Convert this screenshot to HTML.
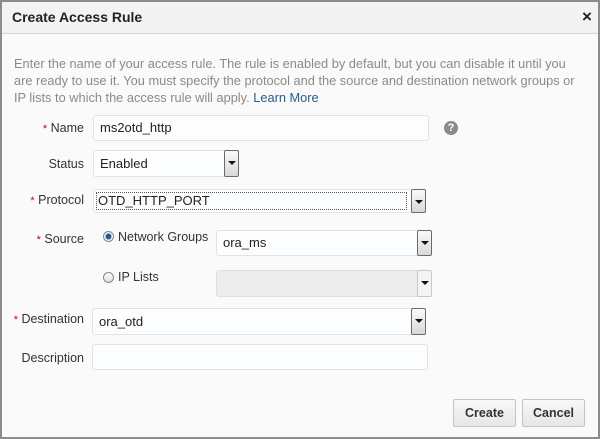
<!DOCTYPE html>
<html><head><style>
*{box-sizing:border-box;margin:0;padding:0}
body{width:600px;height:439px;background:#fff;font-family:"Liberation Sans",Arial,sans-serif;position:relative;overflow:hidden}
.dlg{position:absolute;left:0;top:0;width:600px;height:439px;border:2px solid #8c8c8c;background:#fafafa}
.hdr{position:absolute;left:0;top:0;width:596px;height:32px;background:#f3f3f3;border-bottom:1px solid #d6d6d6}
.t{position:absolute;font-size:13px;color:#333}
.lbl{position:absolute;font-size:12.5px;color:#333;text-align:right;width:90px}
.lbl b{color:#c00;font-weight:normal;font-size:11px}
.inp{position:absolute;background:#fcfdfe;border:1px solid #dfe3e8;border-radius:3px;font-size:13px;color:#222;padding-left:6px}
.arr{position:absolute;top:-1px;right:-1px;bottom:-1px;width:15px;border:1px solid #6b6b6b;background:linear-gradient(#fafafa,#d8d8d8);border-radius:2px}
.arr:after{content:"";position:absolute;left:3px;top:10px;border-left:4px solid transparent;border-right:4px solid transparent;border-top:4px solid #111}
.radio{position:absolute;width:11px;height:11px;border-radius:50%;border:1px solid #888;background:linear-gradient(#fff,#ddd)}
.btn{position:absolute;top:399px;height:28px;border:1px solid #c4c4c4;border-radius:2px;background:linear-gradient(#f8f8f8,#e6e6e6);font-size:12.5px;font-weight:bold;color:#333;text-align:center;line-height:26px}
</style></head><body>
<div class="dlg">
<div class="hdr"></div>
</div>
<div class="t" style="left:12px;top:9px;font-weight:bold;font-size:14px;color:#222">Create Access Rule</div>
<div class="t" style="left:582px;top:7px;font-weight:bold;font-size:17px;color:#222">×</div>
<div class="t" style="left:14px;top:55px;white-space:nowrap;font-size:12.8px;line-height:17px;color:#8a8a8a">Enter the name of your access rule. The rule is enabled by default, but you can disable it until you<br>are ready to use it. You must specify the protocol and the source and destination network groups or<br>IP lists to which the access rule will apply. <span style="color:#2b5c8a">Learn More</span></div>

<div class="lbl" style="left:-6px;top:121px"><b>*</b> Name</div>
<div class="inp" style="left:93px;top:115px;width:336px;height:26px;line-height:24px">ms2otd_http</div>
<div style="position:absolute;left:444px;top:121px;width:14px;height:14px;border-radius:50%;background:#8a8a8a;color:#fff;font-size:11px;font-weight:bold;text-align:center;line-height:14px">?</div>

<div class="lbl" style="left:-6px;top:157px">Status</div>
<div class="inp" style="left:93px;top:150px;width:146px;height:27px;line-height:25px">Enabled<div class="arr"></div></div>

<div class="lbl" style="left:-6px;top:193px"><b>*</b> Protocol</div>
<div class="inp" style="left:93px;top:189px;width:333px;height:24px;line-height:22px;padding-left:4px"><div style="position:absolute;left:2px;top:2px;right:18px;bottom:2px;border:1px dotted #555"></div>OTD_HTTP_PORT<div class="arr"></div></div>

<div class="lbl" style="left:-6px;top:232px"><b>*</b> Source</div>
<div class="radio" style="left:103px;top:231px;background:radial-gradient(#2a5a8a 2.5px,#fff 3.5px,#ddd)"></div>
<div class="t" style="left:118px;top:230px;font-size:12.5px">Network Groups</div>
<div class="inp" style="left:216px;top:230px;width:216px;height:26px;line-height:24px">ora_ms<div class="arr"></div></div>

<div class="radio" style="left:103px;top:272px"></div>
<div class="t" style="left:118px;top:270px;font-size:12.5px">IP Lists</div>
<div class="inp" style="left:216px;top:270px;width:216px;height:27px;background:#ececec;border-color:#e0e0e0"><div class="arr" style="border-color:#c8c8c8;background:#f4f4f4"></div></div>

<div class="lbl" style="left:-6px;top:312px"><b>*</b> Destination</div>
<div class="inp" style="left:92px;top:308px;width:334px;height:27px;line-height:25px">ora_otd<div class="arr"></div></div>

<div class="lbl" style="left:-6px;top:351px">Description</div>
<div class="inp" style="left:92px;top:344px;width:336px;height:26px"></div>

<div class="btn" style="left:453px;width:63px">Create</div>
<div class="btn" style="left:522px;width:63px">Cancel</div>
</body></html>
